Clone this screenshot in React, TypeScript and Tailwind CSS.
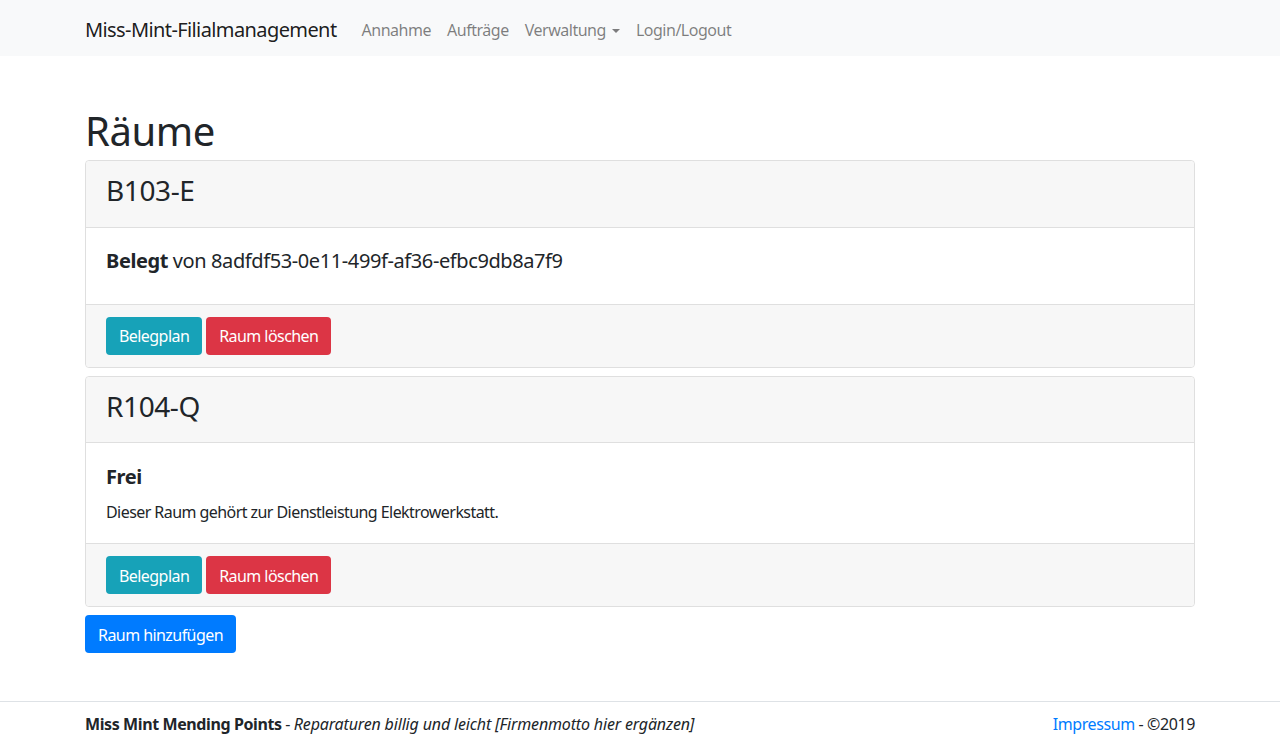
import React from "react";

const font = { fontFamily: '"Noto Sans", "Open Sans", sans-serif' };

function Btn({ color, children }: { color: "info" | "danger" | "primary"; children: React.ReactNode }) {
  const cls =
    color === "info"
      ? "bg-[#17a2b8]"
      : color === "danger"
      ? "bg-[#dc3545]"
      : "bg-[#007bff]";
  return (
    <button className={`${cls} text-white text-[16px] leading-[24px] h-[38px] px-[12px] pt-[1px] rounded-[4px] border border-transparent tracking-[-0.035em]`}>
      {children}
    </button>
  );
}

function Card({ title, children }: { title: string; children: React.ReactNode }) {
  return (
    <div className="border border-[#dfdfdf] rounded-[4px] mb-[8px] bg-white">
      <div className="bg-[#f7f7f7] px-[20px] pt-[13px] pb-[11px] border-b border-[#dfdfdf] rounded-t-[4px]">
        <h3 className="text-[28px] leading-[33.6px] mb-[8px] text-[#212529] font-normal">{title}</h3>
      </div>
      {children}
      <div className="bg-[#f7f7f7] px-[20px] py-[12px] border-t border-[#dfdfdf] rounded-b-[4px] flex gap-[4px]">
        <Btn color="info">Belegplan</Btn>
        <Btn color="danger">Raum löschen</Btn>
      </div>
    </div>
  );
}

export default function App() {
  return (
    <div style={font} className="text-[#212529] text-[16px] leading-[24px] bg-white min-h-[734px] tracking-[-0.025em]">
      <nav className="bg-[#f8f9fa] h-[56px]">
        <div className="w-[1140px] mx-auto px-[15px] h-full flex items-center pt-[3px]">
          <span className="text-[20px] leading-[30px] text-black/90 mr-[17px] tracking-[-0.03em]">Miss-Mint-Filialmanagement</span>
          <div className="flex text-black/50 tracking-[-0.03em]">
            <span className="px-[8px]">Annahme</span>
            <span className="px-[8px]">Aufträge</span>
            <span className="px-[8px] flex items-center">
              Verwaltung
              <span className="ml-[6px] mt-[2px] w-0 h-0 border-l-[4.8px] border-r-[4.8px] border-t-[4.8px] border-l-transparent border-r-transparent border-t-black/50"></span>
            </span>
            <span className="px-[8px]">Login/Logout</span>
          </div>
        </div>
      </nav>
      <main className="w-[1140px] mx-auto px-[15px] pt-[48px] pb-[48px]">
        <h1 className="text-[40px] leading-[48px] font-normal mb-[8px] pt-[3px] h-[48px]">Räume</h1>
        <Card title="B103-E">
          <div className="px-[20px] pt-[21px] pb-[23px]">
            <h5 className="text-[20px] leading-[24px] mb-[8px] font-normal">
              <b className="font-bold">Belegt</b> von 8adfdf53-0e11-499f-af36-efbc9db8a7f9
            </h5>
          </div>
        </Card>
        <Card title="R104-Q">
          <div className="px-[20px] pt-[22px] pb-[19px]">
            <h5 className="text-[20px] leading-[24px] mb-[11px] font-bold">Frei</h5>
            <p className="text-[16px] leading-[24px] tracking-[-0.035em]">Dieser Raum gehört zur Dienstleistung Elektrowerkstatt.</p>
          </div>
        </Card>
        <Btn color="primary">Raum hinzufügen</Btn>
      </main>
      <footer className="border-t border-[#dee2e6] pt-[10px]">
        <div className="w-[1140px] mx-auto px-[15px] flex justify-between">
          <div>
            <b className="font-bold">Miss Mint Mending Points</b> - <i className="tracking-[-0.01em]">Reparaturen billig und leicht [Firmenmotto hier ergänzen]</i>
          </div>
          <div>
            <span className="text-[#007bff]">Impressum</span> - ©2019
          </div>
        </div>
      </footer>
    </div>
  );
}
